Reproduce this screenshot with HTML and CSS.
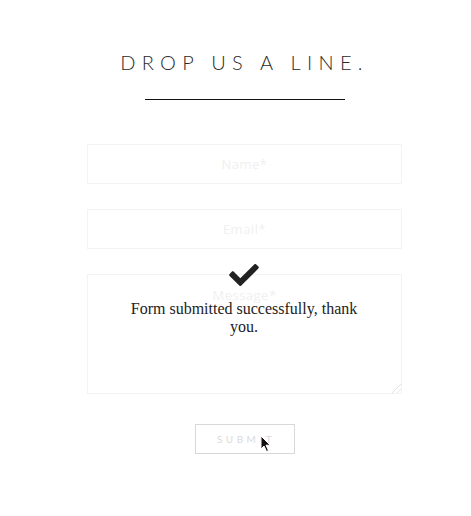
FILE: index.html
```html
<!DOCTYPE html>
<html>
<head>
<meta charset="utf-8">
<link rel="stylesheet" href="styles.css">
</head>
<body>
<div class="wrap">
  <h1 class="title">DROP US A LINE.</h1>
  <div class="rule"></div>
  <form class="form">
    <input class="field" type="text" placeholder="Name*">
    <input class="field" type="text" placeholder="Email*">
    <textarea class="field message" placeholder="Message*"></textarea>
    <button class="submit" type="button">SUBMIT</button>
    <div class="overlay">
      <svg class="check" viewBox="0 66 512 380" width="30" height="22"><path fill="#222" d="M173.898 439.404l-166.4-166.4c-9.997-9.997-9.997-26.206 0-36.204l36.203-36.204c9.997-9.998 26.207-9.998 36.204 0L192 312.69 432.095 72.596c9.997-9.997 26.207-9.997 36.204 0l36.203 36.204c9.997 9.997 9.997 26.206 0 36.204l-294.4 294.401c-9.998 9.997-26.207 9.997-36.204-.001z"/></svg>
      <p class="msg">Form submitted successfully, thank you.</p>
    </div>
    <svg class="cursor" viewBox="0 0 12 18" width="12" height="18"><path d="M1 1 L1 14 L4 11 L6.5 16.5 L8.5 15.5 L6 10.2 L10.2 10.2 Z" fill="#111" stroke="#fff" stroke-width="1"/></svg>
  </form>
</div>
</body>
</html>
```
FILE: styles.css
```css
html, body { margin: 0; padding: 0; background: #fff; }
.wrap {
  width: 315px;
  margin-left: 87px;
  padding-top: 50px;
  display: flex;
  flex-direction: column;
  align-items: center;
}
.title {
  margin: 0;
  font-family: "Lato", sans-serif;
  font-weight: 300;
  font-size: 20px;
  line-height: 24px;
  letter-spacing: 6.3px;
  color: #2a2a2a;
  white-space: nowrap;
  padding-left: 0;
}
.rule {
  width: 200px;
  height: 1px;
  background: #111;
  margin-top: 25px;
}
.form {
  position: relative;
  width: 315px;
  margin-top: 44px;
  display: flex;
  flex-direction: column;
  align-items: center;
  gap: 25px;
}
.field {
  box-sizing: border-box;
  width: 315px;
  height: 40px;
  margin: 0;
  border: 1px solid #f3f3f3;
  background: #fff;
  font-family: "Open Sans", sans-serif;
  font-size: 13px;
  text-align: center;
  outline: none;
  padding: 0;
}
.field::placeholder { color: #f0f0f0; letter-spacing: 0.5px; }
.message {
  height: 120px;
  padding-top: 11px;
  resize: vertical;
}
.message::-webkit-resizer {
  background: linear-gradient(135deg, transparent 0 68%, #e4e4e4 68% 73%, transparent 73% 84%, #e4e4e4 84% 89%, transparent 89%);
}
.submit {
  box-sizing: border-box;
  width: 100px;
  height: 30px;
  margin-top: 5px;
  border: 1px solid #d8d8d8;
  background: #fff;
  font-family: "Lato", sans-serif;
  font-size: 10px;
  letter-spacing: 3.5px;
  color: #dadada;
  padding: 0 0 0 3px;
}
.overlay {
  position: absolute;
  left: 37px;
  top: 120px;
  width: 240px;
  display: flex;
  flex-direction: column;
  align-items: center;
}
.check { display: block; }
.msg {
  margin: 14px 0 0;
  font-family: "Liberation Serif", serif;
  font-size: 16px;
  line-height: 18px;
  color: #222;
  text-align: center;
}
.cursor {
  position: absolute;
  left: 173px;
  top: 291px;
}
```
